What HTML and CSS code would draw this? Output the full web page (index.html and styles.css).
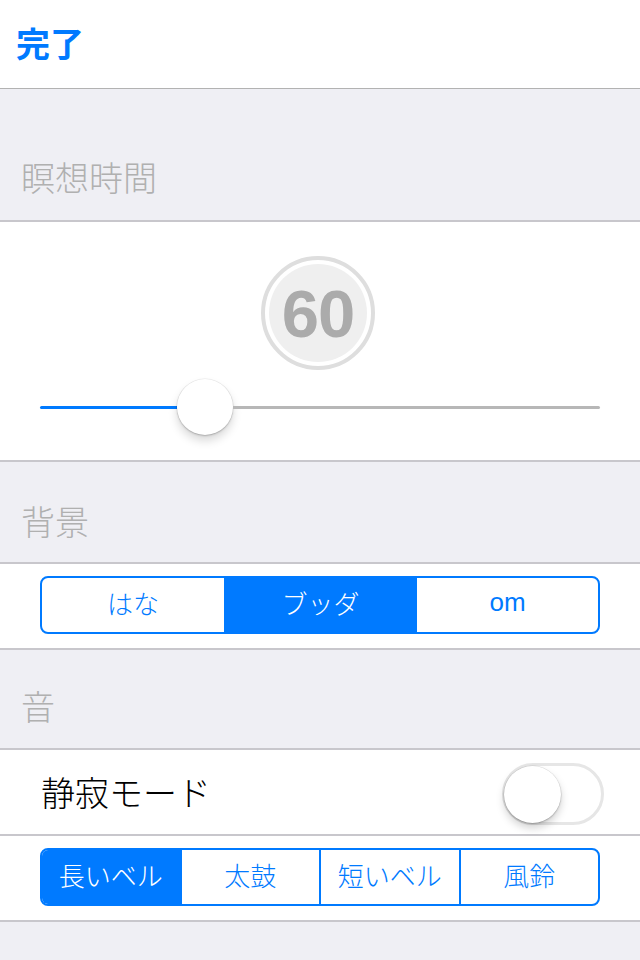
FILE: index.html
```html
<!DOCTYPE html>
<html lang="ja">
<head>
<meta charset="utf-8">
<link rel="stylesheet" href="styles.css">
</head>
<body>
<div class="nav"><span class="done">完了</span></div>

<div class="header header-tall"><span>瞑想時間</span></div>
<div class="cell slider-cell">
  <div class="ring"><div class="disk">60</div></div>
  <div class="slider">
    <div class="track-fill"></div>
    <div class="thumb"></div>
    <div class="track-rest"></div>
  </div>
</div>

<div class="header"><span>背景</span></div>
<div class="cell seg-cell">
  <div class="seg">
    <div class="seg-item w184">はな</div>
    <div class="seg-item w189 on">ブッダ</div>
    <div class="seg-item w187">om</div>
  </div>
</div>

<div class="header header-short"><span>音</span></div>
<div class="cell toggle-cell">
  <span class="toggle-label">静寂モード</span>
  <div class="switch"><div class="knob"></div></div>
</div>
<div class="cell seg-cell last">
  <div class="seg">
    <div class="seg-item on">長いベル</div>
    <div class="seg-item">太鼓</div>
    <div class="seg-item">短いベル</div>
    <div class="seg-item">風鈴</div>
  </div>
</div>
</body>
</html>
```
FILE: styles.css
```css
html, body {
  margin: 0;
  padding: 0;
}
body {
  background: #efeff4;
  font-family: "Liberation Sans", "Noto Sans CJK JP", sans-serif;
  width: 640px;
  height: 960px;
  overflow: hidden;
}
.nav {
  height: 88px;
  background: #fff;
  border-bottom: 1px solid #b2b2b2;
  display: flex;
  align-items: center;
  padding-left: 16px;
  box-sizing: content-box;
}
.done {
  color: #007aff;
  font-size: 34px;
  font-weight: bold;
  font-family: "Noto Sans CJK JP", sans-serif;
  line-height: 40px;
  margin-top: -2px;
}
.header {
  height: 102px;
  box-sizing: border-box;
  display: flex;
  align-items: flex-end;
  padding: 0 0 21px 21px;
  border-bottom: 2px solid #c8c7cc;
  color: #b0b0b0;
  font-size: 34px;
  font-family: "Noto Sans CJK JP", sans-serif;
  font-weight: 300;
  line-height: 40px;
}
.header-tall { height: 133px; padding-bottom: 23px; }
.header-short { height: 100px; padding-bottom: 22px; }
.cell {
  background: #fff;
  border-bottom: 2px solid #c8c7cc;
}
.slider-cell {
  height: 240px;
  box-sizing: border-box;
  padding-top: 34px;
  display: flex;
  flex-direction: column;
  align-items: center;
}
.ring {
  width: 114px;
  height: 114px;
  box-sizing: border-box;
  border: 4px solid #dedede;
  border-radius: 50%;
  padding: 4px;
  margin-left: -4px;
}
.disk {
  width: 100%;
  height: 100%;
  border-radius: 50%;
  background: #efefef;
  display: flex;
  align-items: center;
  justify-content: center;
  color: #ababab;
  font-family: "Liberation Sans", sans-serif;
  font-weight: bold;
  font-size: 67px;
  letter-spacing: -1px;
  padding-top: 1px;
  box-sizing: border-box;
}
.slider {
  margin-top: 9px;
  width: 560px;
  height: 56px;
  display: flex;
  align-items: center;
}
.track-fill {
  width: 137px;
  height: 3px;
  background: #007aff;
  border-radius: 2px 0 0 2px;
}
.track-rest {
  flex: 1;
  height: 3px;
  background: #b7b7b7;
  border-radius: 0 2px 2px 0;
}
.thumb {
  width: 56px;
  height: 56px;
  border-radius: 50%;
  background: #fff;
  box-shadow: 0 6px 10px rgba(0,0,0,0.15), 0 1px 2px rgba(0,0,0,0.2), 0 0 0 0.5px rgba(0,0,0,0.08);
  flex: none;
}
.seg-cell {
  padding: 12px 40px 14px;
  box-sizing: content-box;
}
.seg {
  height: 58px;
  box-sizing: border-box;
  border: 2px solid #007aff;
  border-radius: 8px;
  display: flex;
  overflow: hidden;
}
.seg-item {
  flex: 1;
  display: flex;
  align-items: center;
  justify-content: center;
  color: #007aff;
  font-size: 26px;
  font-family: "Liberation Sans", "Noto Sans CJK JP", sans-serif;
  font-weight: 300;
  border-left: 2px solid #007aff;
  padding-bottom: 5px;
}
.seg-item:first-child { border-left: none; }
.seg-item.on {
  background: #007aff;
  color: #fff;
}
.w184 { flex: none; width: 182px; }
.w189 { flex: none; width: 189px; }
.w187 { flex: 1; }
.toggle-cell {
  height: 84px;
  display: flex;
  align-items: center;
  justify-content: space-between;
  padding: 0 36px 0 41px;
}
.toggle-label {
  font-size: 34px;
  font-family: "Noto Sans CJK JP", sans-serif;
  font-weight: 300;
  color: #000;
  margin-top: -2px;
}
.switch {
  width: 102px;
  height: 62px;
  box-sizing: border-box;
  border: 3px solid #e6e6e6;
  border-radius: 31px;
  padding: 0;
  display: flex;
  align-items: center;
  margin-top: 4px;
}
.knob {
  width: 57px;
  height: 57px;
  border-radius: 50%;
  background: #fff;
  margin-left: -1px;
  box-shadow: 0 5px 8px rgba(0,0,0,0.18), 0 1px 2px rgba(0,0,0,0.2), 0 0 0 0.5px rgba(0,0,0,0.1);
}
```
